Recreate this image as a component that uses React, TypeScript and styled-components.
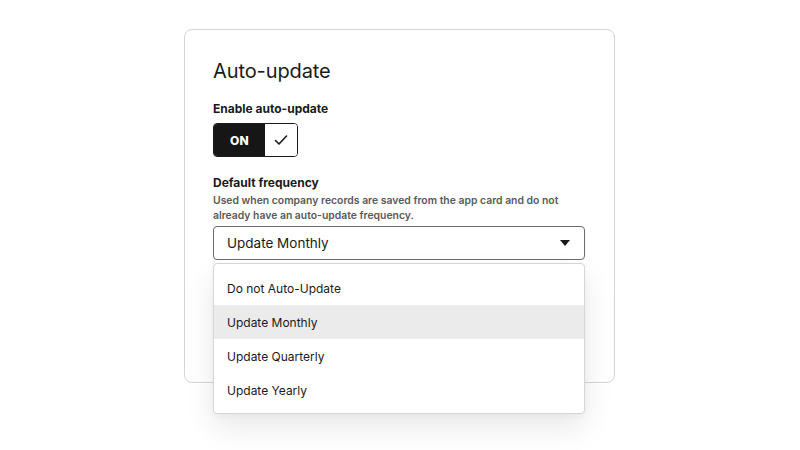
import React from "react";
import styled, { createGlobalStyle } from "styled-components";

const Global = createGlobalStyle`
  html, body { margin: 0; padding: 0; background: #ffffff; }
  body { font-family: Inter, "Noto Sans", Arial, sans-serif; color: #1a1a1a; }
  * { box-sizing: border-box; }
`;

const Page = styled.div`
  width: 800px;
  height: 450px;
  display: flex;
  justify-content: flex-start;
  padding: 29px 0 0 184px;
  overflow: hidden;
`;

const Card = styled.div`
  width: 431px;
  height: 354px;
  border: 1px solid #d4d4d4;
  border-radius: 8px;
  background: #fff;
  padding: 27px 28px 0 28px;
  display: flex;
  flex-direction: column;
`;

const Title = styled.h2`
  margin: 0;
  font-size: 20px;
  line-height: 28px;
  font-weight: 400;
  color: #1a1a1a;
  letter-spacing: -0.1px;
`;

const Label = styled.div<{ $mt: number }>`
  margin-top: ${(p) => p.$mt}px;
  font-size: 12px;
  line-height: 20px;
  font-weight: 700;
  color: #1a1a1a;
`;

const Toggle = styled.div`
  margin-top: 4px;
  width: 85px;
  height: 34px;
  display: flex;
  border: 1px solid #1a1a1a;
  border-radius: 4px;
  overflow: hidden;
`;

const ToggleOn = styled.div`
  width: 51px;
  background: #161616;
  color: #fff;
  font-size: 12px;
  font-weight: 800;
  display: flex;
  align-items: center;
  justify-content: center;
  letter-spacing: 0.3px;
`;

const ToggleCheck = styled.div`
  flex: 1;
  background: #fff;
  display: flex;
  align-items: center;
  justify-content: center;
`;

const Help = styled.div`
  margin-top: 0;
  font-size: 10.4px;
  line-height: 15px;
  font-weight: 600;
  color: #5a5a5a;
`;

const SelectWrap = styled.div`
  position: relative;
  margin-top: 3px;
  width: 372px;
`;

const Select = styled.div`
  height: 34px;
  border: 1px solid #6b6b6b;
  border-radius: 4px;
  display: flex;
  align-items: center;
  justify-content: space-between;
  padding: 0 14px 0 13px;
  font-size: 13.5px;
  color: #1a1a1a;
`;

const Caret = styled.div`
  width: 0;
  height: 0;
  border-left: 5.5px solid transparent;
  border-right: 5.5px solid transparent;
  border-top: 6px solid #1a1a1a;
`;

const Menu = styled.ul`
  position: absolute;
  top: 37px;
  left: 0;
  right: 0;
  margin: 0;
  list-style: none;
  padding: 7px 0 6px;
  background: #fff;
  border: 1px solid #d6d6d6;
  border-radius: 4px;
  box-shadow: 0 14px 30px rgba(0, 0, 0, 0.09), 0 2px 6px rgba(0, 0, 0, 0.04);
`;

const Item = styled.li<{ $active?: boolean }>`
  height: 34px;
  display: flex;
  align-items: center;
  padding-left: 13px;
  font-size: 12px;
  color: #1a1a1a;
  background: ${(p) => (p.$active ? "#ebebeb" : "transparent")};
`;

const options = ["Do not Auto-Update", "Update Monthly", "Update Quarterly", "Update Yearly"];

export default function App() {
  return (
    <>
      <Global />
      <Page>
        <Card>
          <Title>Auto-update</Title>
          <Label $mt={14}>Enable auto-update</Label>
          <Toggle>
            <ToggleOn>ON</ToggleOn>
            <ToggleCheck>
              <svg width="16" height="16" viewBox="0 0 16 16" fill="none">
                <path d="M2.5 8.5 L6 12 L13.5 4" stroke="#1a1a1a" strokeWidth="1.6" strokeLinecap="round" strokeLinejoin="round" />
              </svg>
            </ToggleCheck>
          </Toggle>
          <Label $mt={16}>Default frequency</Label>
          <Help>
            Used when company records are saved from the app card and do not
            <br />
            already have an auto-update frequency.
          </Help>
          <SelectWrap>
            <Select>
              <span>Update Monthly</span>
              <Caret />
            </Select>
            <Menu>
              {options.map((o) => (
                <Item key={o} $active={o === "Update Monthly"}>
                  {o}
                </Item>
              ))}
            </Menu>
          </SelectWrap>
        </Card>
      </Page>
    </>
  );
}
